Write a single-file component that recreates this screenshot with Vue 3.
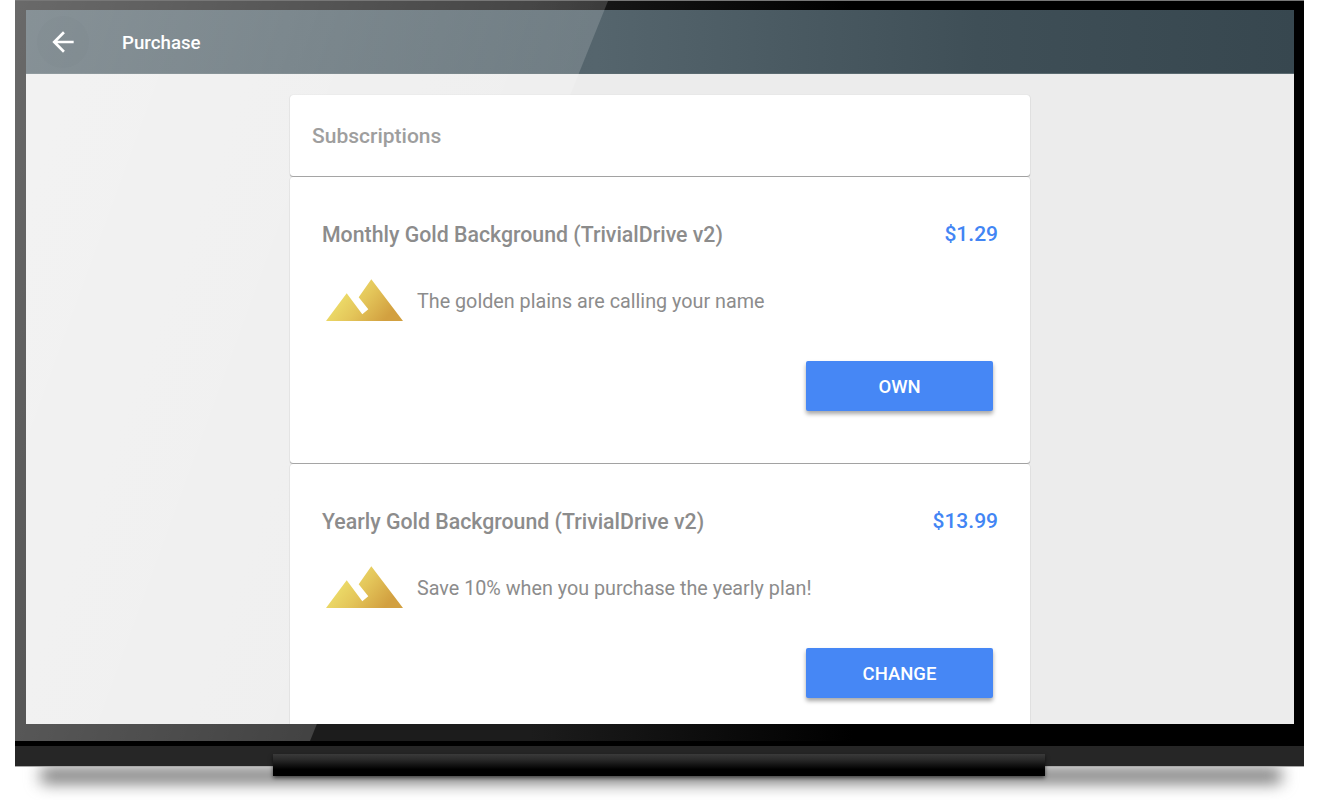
<template>
  <div class="device">
    <div class="bezel">
      <div class="screen">
        <header class="toolbar">
          <button type="button" class="back-button" aria-label="Back">
            <svg viewBox="0 0 24 24" width="32" height="32">
              <path fill="#fff" d="M20 11H7.83l5.59-5.59L12 4l-8 8 8 8 1.41-1.41L7.83 13H20v-2z" />
            </svg>
          </button>
          <h1>Purchase</h1>
        </header>

        <main class="content">
          <section class="list">
            <div class="card list-header">Subscriptions</div>
            <article v-for="item in items" :key="item.title" class="card sku">
              <div class="sku-top">
                <h2>{{ item.title }}</h2>
                <span class="price">{{ item.price }}</span>
              </div>
              <div class="sku-body">
                <svg class="gold-icon" viewBox="0 0 77 42" width="77" height="42">
                  <defs>
                    <linearGradient :id="item.gradient" x1="0" y1="0" x2="1" y2="0.45">
                      <stop offset="0.25" stop-color="#eee06c" />
                      <stop offset="0.6" stop-color="#e4c65a" />
                      <stop offset="1" stop-color="#d2a040" />
                    </linearGradient>
                  </defs>
                  <path
                    :fill="`url(#${item.gradient})`"
                    d="M0 42 20.7 14.3 36.3 35.3 42.3 30.3 32.7 18.3 45.3 0.3 77 42Z"
                  />
                </svg>
                <p>{{ item.description }}</p>
              </div>
              <div class="sku-actions">
                <button type="button" class="action">{{ item.action }}</button>
              </div>
            </article>
          </section>
        </main>
      </div>
    </div>
    <div class="glare"></div>
    <div class="base"></div>
    <div class="stand"></div>
    <div class="floor-shadow"></div>
  </div>
</template>

<script setup>
const items = [
  {
    title: 'Monthly Gold Background (TrivialDrive v2)',
    price: '$1.29',
    description: 'The golden plains are calling your name',
    action: 'OWN',
    gradient: 'gold-monthly'
  },
  {
    title: 'Yearly Gold Background (TrivialDrive v2)',
    price: '$13.99',
    description: 'Save 10% when you purchase the yearly plan!',
    action: 'CHANGE',
    gradient: 'gold-yearly'
  }
]
</script>

<style scoped>
.device {
  position: relative;
  width: 1289px;
  height: 799px;
  margin: 1px 0 0 15px;
  font-family: Roboto, "Liberation Sans", sans-serif;
}

.bezel {
  box-sizing: border-box;
  height: 743px;
  padding: 9px 10px 20px 11px;
  background: linear-gradient(90deg, #1c1c1c 0%, #1c1c1c 40%, #000 65%);
  box-shadow: 0 -1px 0 #777, inset 0 -3px 0 #000;
}

.screen {
  height: 714px;
  overflow: hidden;
  background: #ececec;
}

.toolbar {
  display: flex;
  align-items: center;
  box-sizing: border-box;
  height: 64px;
  padding-left: 21px;
  background: linear-gradient(90deg, #4a5a62 0%, #55656d 45%, #3f4f57 75%, #37474f 100%);
  border-bottom: 1px solid #5a6a70;
}

.back-button {
  position: relative;
  z-index: 2;
  display: flex;
  width: 32px;
  height: 32px;
  padding: 0;
  border: none;
  background: none;
}

.back-button::before {
  content: "";
  position: absolute;
  top: -10px;
  left: -10px;
  width: 52px;
  height: 52px;
  border-radius: 50%;
  background: rgba(0, 0, 0, 0.012);
}

.back-button svg {
  position: relative;
}

.toolbar h1 {
  position: relative;
  z-index: 2;
  margin: 2px 0 0 43px;
  font-size: 18.7px;
  font-weight: 500;
  color: #fff;
}

.content {
  display: flex;
  justify-content: center;
  padding-top: 21px;
}

.list {
  position: relative;
  z-index: 2;
  width: 740px;
  display: flex;
  flex-direction: column;
  gap: 1px;
}

.card {
  box-sizing: border-box;
  background: #fff;
  border-radius: 3px;
  box-shadow: 0 1px 1px rgba(0, 0, 0, 0.32), 0 0 1px rgba(0, 0, 0, 0.18);
}

.list-header {
  height: 81px;
  padding: 28px 22px 0;
  font-size: 21px;
  font-weight: 500;
  line-height: 26px;
  color: #9e9e9e;
}

.sku {
  height: 286px;
  padding: 43px 32px 0;
  flex-shrink: 0;
}

.sku-top {
  display: flex;
  justify-content: space-between;
  align-items: center;
  height: 28px;
}

.sku-top h2 {
  margin: 0;
  font-size: 21.3px;
  font-weight: 500;
  color: #8c8c8c;
}

.price {
  font-size: 21px;
  font-weight: 500;
  color: #4285f4;
}

.sku-body {
  display: flex;
  align-items: center;
  gap: 14px;
  margin: 31px 0 0 4px;
  height: 42px;
}

.sku-body p {
  margin: 2px 0 0;
  font-size: 19.75px;
  color: #8c8c8c;
}

.sku-actions {
  display: flex;
  justify-content: flex-end;
  margin: 40px 5px 0 0;
}

.action {
  width: 187px;
  height: 50px;
  padding: 2px 0 0;
  border: none;
  border-radius: 2px;
  background: #4687f5;
  color: #fff;
  font-family: inherit;
  font-size: 18.5px;
  font-weight: 500;
  box-shadow: 0 3px 4px rgba(0, 0, 0, 0.35);
}

.glare {
  position: absolute;
  top: 0;
  left: 0;
  z-index: 1;
  width: 100%;
  height: 740px;
  background: linear-gradient(110deg, rgba(255, 255, 255, 0.34) 0%, rgba(255, 255, 255, 0.13) 45%);
  clip-path: polygon(0 0, 593px 0, 295px 740px, 0 740px);
}

.base {
  height: 22px;
  background: #262626;
  border-top: 2px solid #000;
  box-sizing: border-box;
  box-shadow: 0 1px 0 #aaa;
}

.stand {
  position: absolute;
  z-index: 3;
  left: 258px;
  top: 753px;
  width: 772px;
  height: 22px;
  background: linear-gradient(180deg, #3a3a3a 0%, #2a2a2a 25%, #000 70%);
  box-shadow: 0 2px 4px rgba(0, 0, 0, 0.6);
}

.floor-shadow {
  position: absolute;
  z-index: -1;
  left: 26px;
  top: 767px;
  width: 1240px;
  height: 15px;
  background: #707070;
  filter: blur(8px);
}
</style>
